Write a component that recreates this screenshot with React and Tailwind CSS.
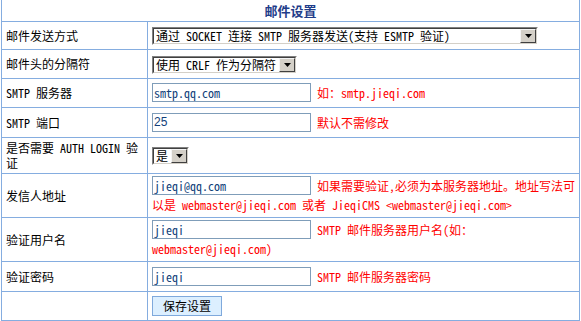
const mono = "font-['Noto_Sans_Mono_CJK_SC','Noto_Sans_CJK_SC','Liberation_Mono',monospace]";

function Select({ value, width }) {
  return (
    <span className={`inline-flex align-middle h-[18px] border border-t-[#808080] border-l-[#808080] border-b-white border-r-white ${width}`}>
      <span className="flex flex-1 items-center border border-t-[#404040] border-l-[#404040] border-b-[#d4d0c8] border-r-[#d4d0c8] bg-white">
        <span className="flex-1 pl-[2px] leading-[14px] whitespace-nowrap">{value}</span>
        <span className="flex h-[14px] w-[16px] items-center justify-center bg-[#d4d0c8] border border-t-[#f4f4f4] border-l-[#f4f4f4] border-b-[#404040] border-r-[#404040]">
          <svg width="7" height="4" viewBox="0 0 7 4">
            <path d="M0 0h7L3.5 4z" fill="#000" />
          </svg>
        </span>
      </span>
    </span>
  );
}

function Input({ value, sans }) {
  return (
    <span
      className={`inline-block align-top w-[159px] h-[19px] border border-[#7f9db9] bg-white pl-[1px] leading-[17px] text-[#123f7a] ${
        sans ? "font-['Liberation_Sans',sans-serif]" : ""
      }`}
    >
      {value}
    </span>
  );
}

function Hint({ children }) {
  return <span className="text-[#ff0000]">{children}</span>;
}

const rows = [
  { label: "邮件发送方式", h: "h-[28px]", body: <Select value="通过 SOCKET 连接 SMTP 服务器发送(支持 ESMTP 验证)" width="w-[386px]" /> },
  { label: "邮件头的分隔符", h: "h-[29px]", body: <Select value="使用 CRLF 作为分隔符" width="w-[145px]" /> },
  {
    label: "SMTP 服务器",
    h: "h-[29px]",
    body: (
      <>
        <Input value="smtp.qq.com" /> <Hint>如：smtp.jieqi.com</Hint>
      </>
    ),
  },
  {
    label: "SMTP 端口",
    h: "h-[30px]",
    body: (
      <>
        <Input value="25" sans /> <Hint>默认不需修改</Hint>
      </>
    ),
  },
  { label: "是否需要 AUTH LOGIN 验证", h: "h-[36px]", body: <Select value="是" width="w-[37px]" /> },
  {
    label: "发信人地址",
    h: "h-[44px]",
    body: (
      <>
        <Input value="jieqi@qq.com" />{" "}
        <Hint>如果需要验证,必须为本服务器地址。地址写法可以是 webmaster@jieqi.com 或者 JieqiCMS &lt;webmaster@jieqi.com&gt;</Hint>
      </>
    ),
  },
  {
    label: "验证用户名",
    h: "h-[44px]",
    body: (
      <>
        <Input value="jieqi" /> <Hint>SMTP 邮件服务器用户名(如：webmaster@jieqi.com)</Hint>
      </>
    ),
  },
  {
    label: "验证密码",
    h: "h-[30px]",
    body: (
      <>
        <Input value="jieqi" /> <Hint>SMTP 邮件服务器密码</Hint>
      </>
    ),
  },
];

export default function App() {
  return (
    <div className={`w-[581px] h-[321px] bg-white overflow-hidden text-[12px] leading-[15px] text-black ${mono}`}>
      <table className="ml-px w-[579px] border-collapse table-fixed">
        <colgroup>
          <col className="w-[146px]" />
          <col />
        </colgroup>
        <tbody>
          <tr>
            <th
              colSpan={2}
              className="h-[21px] border-x border-b border-[#85ade0] text-center align-middle text-[13px] font-bold text-[#1f3d8a] font-['Noto_Sans_CJK_SC',sans-serif]"
            >
              邮件设置
            </th>
          </tr>
          {rows.map((r) => (
            <tr key={r.label}>
              <td className={`${r.h} border border-[#85ade0] pl-[4px] pr-[4px] align-middle`}>{r.label}</td>
              <td className={`${r.h} border border-[#85ade0] pl-[4px] pr-[2px] align-middle leading-[19px]`}>{r.body}</td>
            </tr>
          ))}
          <tr>
            <td className="h-[29px] border border-[#85ade0]" />
            <td className="h-[29px] border border-[#85ade0] pl-[4px] align-middle">
              <button className="w-[70px] h-[20px] border border-[#7fa9dc] bg-[#dcefff] text-[12px] leading-[18px] align-middle">
                保存设置
              </button>
            </td>
          </tr>
        </tbody>
      </table>
    </div>
  );
}
